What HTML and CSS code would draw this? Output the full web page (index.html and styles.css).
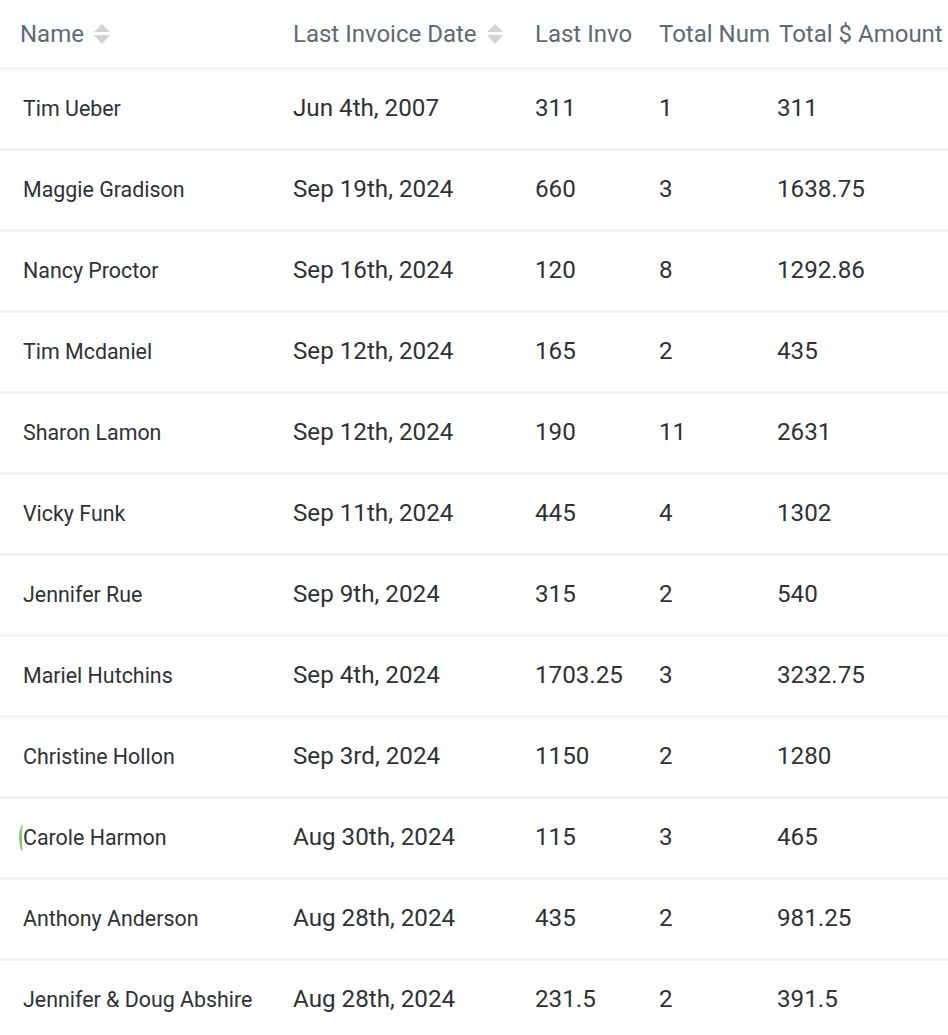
FILE: index.html
```html
<!DOCTYPE html>
<html>
<head>
<meta charset="utf-8">
<link rel="stylesheet" href="styles.css">
</head>
<body>
<div class="table">
  <div class="row head">
    <div class="cell c-name">Name <span class="sort"><svg width="18" height="22" viewBox="0 0 18 22"><path d="M9 1 L17 9 L1 9 Z" fill="#d3d3d3"/><path d="M1 12 L17 12 L9 21 Z" fill="#d3d3d3"/></svg></span></div>
    <div class="cell c-date">Last Invoice Date <span class="sort"><svg width="18" height="22" viewBox="0 0 18 22"><path d="M9 1 L17 9 L1 9 Z" fill="#d3d3d3"/><path d="M1 12 L17 12 L9 21 Z" fill="#d3d3d3"/></svg></span></div>
    <div class="cell c-inv">Last Invo</div>
    <div class="cell c-num">Total Num</div>
    <div class="cell c-amt">Total $ Amount</div>
  </div>
  <div class="row"><div class="cell c-name">Tim Ueber</div><div class="cell c-date">Jun 4th, 2007</div><div class="cell c-inv">311</div><div class="cell c-num">1</div><div class="cell c-amt">311</div></div>
  <div class="row"><div class="cell c-name">Maggie Gradison</div><div class="cell c-date">Sep 19th, 2024</div><div class="cell c-inv">660</div><div class="cell c-num">3</div><div class="cell c-amt">1638.75</div></div>
  <div class="row"><div class="cell c-name">Nancy Proctor</div><div class="cell c-date">Sep 16th, 2024</div><div class="cell c-inv">120</div><div class="cell c-num">8</div><div class="cell c-amt">1292.86</div></div>
  <div class="row"><div class="cell c-name">Tim Mcdaniel</div><div class="cell c-date">Sep 12th, 2024</div><div class="cell c-inv">165</div><div class="cell c-num">2</div><div class="cell c-amt">435</div></div>
  <div class="row"><div class="cell c-name">Sharon Lamon</div><div class="cell c-date">Sep 12th, 2024</div><div class="cell c-inv">190</div><div class="cell c-num">11</div><div class="cell c-amt">2631</div></div>
  <div class="row"><div class="cell c-name">Vicky Funk</div><div class="cell c-date">Sep 11th, 2024</div><div class="cell c-inv">445</div><div class="cell c-num">4</div><div class="cell c-amt">1302</div></div>
  <div class="row"><div class="cell c-name">Jennifer Rue</div><div class="cell c-date">Sep 9th, 2024</div><div class="cell c-inv">315</div><div class="cell c-num">2</div><div class="cell c-amt">540</div></div>
  <div class="row"><div class="cell c-name">Mariel Hutchins</div><div class="cell c-date">Sep 4th, 2024</div><div class="cell c-inv">1703.25</div><div class="cell c-num">3</div><div class="cell c-amt">3232.75</div></div>
  <div class="row"><div class="cell c-name">Christine Hollon</div><div class="cell c-date">Sep 3rd, 2024</div><div class="cell c-inv">1150</div><div class="cell c-num">2</div><div class="cell c-amt">1280</div></div>
  <div class="row"><div class="cell c-name marked"><span class="mark"></span>Carole Harmon</div><div class="cell c-date">Aug 30th, 2024</div><div class="cell c-inv">115</div><div class="cell c-num">3</div><div class="cell c-amt">465</div></div>
  <div class="row"><div class="cell c-name">Anthony Anderson</div><div class="cell c-date">Aug 28th, 2024</div><div class="cell c-inv">435</div><div class="cell c-num">2</div><div class="cell c-amt">981.25</div></div>
  <div class="row"><div class="cell c-name">Jennifer &amp; Doug Abshire</div><div class="cell c-date">Aug 28th, 2024</div><div class="cell c-inv">231.5</div><div class="cell c-num">2</div><div class="cell c-amt">391.5</div></div>
</div>
</body>
</html>
```

FILE: styles.css
```css
html, body {
  margin: 0;
  padding: 0;
  background: #ffffff;
  overflow: hidden;
}
body {
  font-family: Roboto, "Liberation Sans", sans-serif;
  color: #2e3236;
}
.table {
  width: 948px;
}
.row {
  display: grid;
  grid-template-columns: 273px 242px 124px 118px 191px;
  height: 78px;
  border-bottom: 3px solid #f1f4f7;
  align-items: center;
}
.row.head {
  height: 67px;
  color: #5e6a74;
}
.cell {
  padding-left: 20px;
  padding-bottom: 2px;
  white-space: nowrap;
  font-size: 24.2px;
}
.head .cell {
  font-size: 24px;
  padding-bottom: 0;
  display: flex;
  align-items: center;
}
.row .c-name {
  padding-left: 23px;
  font-size: 21.4px;
}
.head .c-name {
  padding-left: 20px;
  font-size: 24px;
}
.head .c-amt {
  padding-left: 22px;
}
.sort {
  display: inline-flex;
  margin-left: 9px;
}
.sort svg {
  display: block;
}
.marked {
  position: relative;
}
.mark {
  position: absolute;
  left: 19px;
  top: 0;
  width: 8px;
  height: 26px;
  box-sizing: border-box;
  border-left: 3px solid #8cc47b;
  border-radius: 50%;
}
```
